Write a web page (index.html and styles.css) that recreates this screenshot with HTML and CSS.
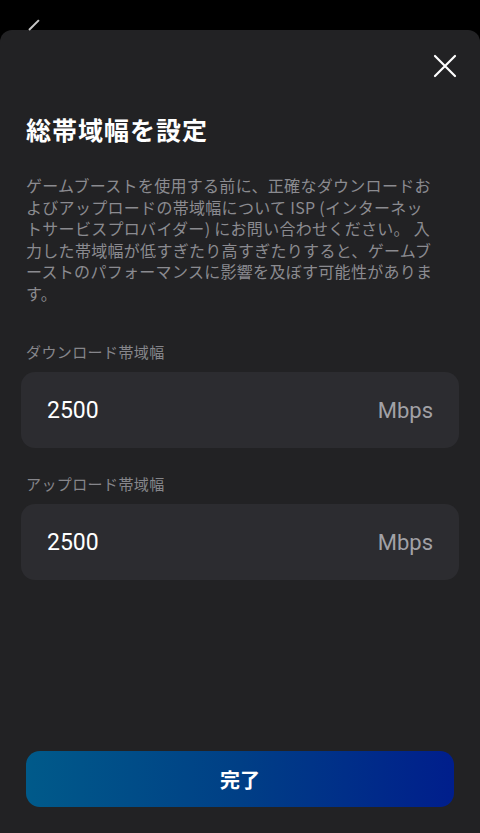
FILE: index.html
```html
<!DOCTYPE html>
<html lang="ja">
<head>
    <meta charset="UTF-8">
    <meta name="viewport" content="width=device-width, initial-scale=1.0">
    <title>総帯域幅を設定</title>
    <link rel="stylesheet" href="styles.css">
</head>
<body>
    <div class="backdrop">
        <span class="back-arrow"></span>
    </div>

    <div class="sheet">
        <div class="sheet-top">
            <button class="close-button" aria-label="閉じる">
                <svg width="24" height="24" viewBox="0 0 24 24">
                    <path d="M2 2 L22 22 M22 2 L2 22" stroke="#fff" stroke-width="2.2" stroke-linecap="round" fill="none"/>
                </svg>
            </button>
        </div>

        <h1 class="title">総帯域幅を設定</h1>

        <p class="description">ゲームブーストを使用する前に、正確なダウンロードおよびアップロードの帯域幅について ISP (インターネットサービスプロバイダー) にお問い合わせください。 入力した帯域幅が低すぎたり高すぎたりすると、ゲームブーストのパフォーマンスに影響を及ぼす可能性があります。</p>

        <div class="field field-download">
            <label class="field-label">ダウンロード帯域幅</label>
            <div class="field-box">
                <span class="field-value">2500</span>
                <span class="field-unit">Mbps</span>
            </div>
        </div>

        <div class="field field-upload">
            <label class="field-label">アップロード帯域幅</label>
            <div class="field-box">
                <span class="field-value">2500</span>
                <span class="field-unit">Mbps</span>
            </div>
        </div>

        <div class="spacer"></div>

        <button class="done-button">完了</button>
    </div>
</body>
</html>
```

FILE: styles.css
```css
html, body {
    margin: 0;
    padding: 0;
    height: 100%;
}

body {
    background-color: #000;
    font-family: "Noto Sans CJK JP", "Noto Sans", sans-serif;
    display: flex;
    flex-direction: column;
    overflow: hidden;
}

.backdrop {
    height: 30px;
    position: relative;
}

.back-arrow {
    position: absolute;
    left: 29px;
    top: 29px;
    width: 14px;
    height: 2px;
    background-color: #c8c8c8;
    transform: rotate(-45deg);
    transform-origin: left center;
}

.sheet {
    flex: 1;
    background-color: #222224;
    border-radius: 12px 12px 0 0;
    display: flex;
    flex-direction: column;
    padding: 0 26px 26px;
}

.sheet-top {
    display: flex;
    justify-content: flex-end;
    padding-top: 24px;
    margin-right: -3px;
}

.close-button {
    background: none;
    border: none;
    padding: 0;
    width: 24px;
    height: 24px;
    cursor: pointer;
}

.title {
    margin: 33px 0 0;
    color: #fff;
    font-size: 25px;
    font-weight: 700;
    line-height: 36px;
    letter-spacing: 1px;
}

.description {
    width: 410px;
    margin: 28px 0 0;
    color: #8b8b90;
    font-size: 16px;
    line-height: 21.5px;
    letter-spacing: 0.3px;
}

.field {
    display: flex;
    flex-direction: column;
}

.field-download {
    margin-top: 37px;
}

.field-upload {
    margin-top: 25px;
}

.field-label {
    color: #86868b;
    font-size: 15px;
    line-height: 22px;
    letter-spacing: 0.4px;
    margin-bottom: 9px;
}

.field-box {
    display: flex;
    justify-content: space-between;
    align-items: center;
    height: 76px;
    margin: 0 -5px;
    padding: 0 26px;
    background-color: #2c2c30;
    border-radius: 14px;
}

.field-value {
    color: #fff;
    font-family: Roboto, "Liberation Sans", sans-serif;
    font-size: 23px;
}

.field-unit {
    color: #a1a1a6;
    font-family: Roboto, "Liberation Sans", sans-serif;
    font-size: 22px;
}

.spacer {
    flex: 1;
}

.done-button {
    height: 56px;
    border: none;
    border-radius: 14px;
    background: linear-gradient(90deg, #005a8a 0%, #003f86 50%, #001e8c 100%);
    color: #fff;
    font-family: "Noto Sans CJK JP", sans-serif;
    font-size: 20px;
    font-weight: 700;
    cursor: pointer;
}
```
